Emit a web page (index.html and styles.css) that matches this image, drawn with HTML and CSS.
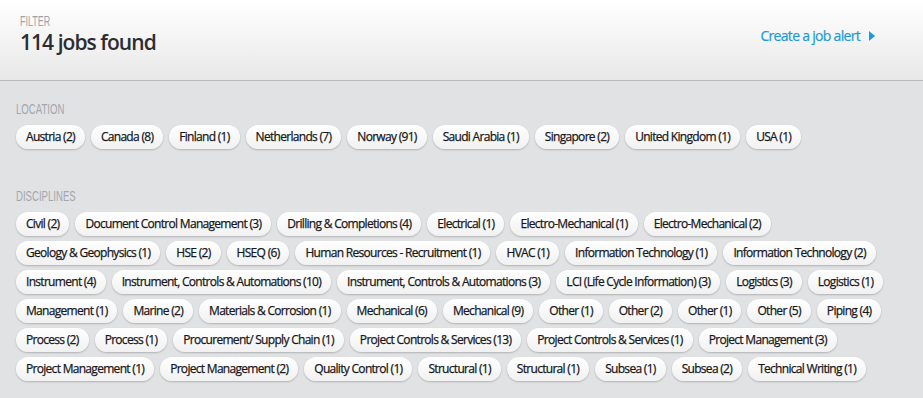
FILE: index.html
```html
<!DOCTYPE html>
<html>
<head>
<meta charset="utf-8">
<link rel="stylesheet" href="styles.css">
</head>
<body>
<header class="head">
  <div class="head-left">
    <div class="eyebrow"><span class="narrow">FILTER</span></div>
    <h1 class="count">114 jobs found</h1>
  </div>
  <a class="alert" href="#">Create a job alert <span class="tri"></span></a>
</header>
<main class="filters">
  <section class="group">
    <h2 class="label"><span class="narrow">LOCATION</span></h2>
    <div class="chips">
      <span class="chip">Austria (2)</span>
      <span class="chip">Canada (8)</span>
      <span class="chip">Finland (1)</span>
      <span class="chip">Netherlands (7)</span>
      <span class="chip">Norway (91)</span>
      <span class="chip">Saudi Arabia (1)</span>
      <span class="chip">Singapore (2)</span>
      <span class="chip">United Kingdom (1)</span>
      <span class="chip">USA (1)</span>
    </div>
  </section>
  <section class="group">
    <h2 class="label"><span class="narrow">DISCIPLINES</span></h2>
    <div class="chips">
      <span class="chip">Civil (2)</span>
      <span class="chip">Document Control Management (3)</span>
      <span class="chip">Drilling &amp; Completions (4)</span>
      <span class="chip">Electrical (1)</span>
      <span class="chip">Electro-Mechanical (1)</span>
      <span class="chip">Electro-Mechanical (2)</span>
      <span class="chip">Geology &amp; Geophysics (1)</span>
      <span class="chip">HSE (2)</span>
      <span class="chip">HSEQ (6)</span>
      <span class="chip">Human Resources - Recruitment (1)</span>
      <span class="chip">HVAC (1)</span>
      <span class="chip">Information Technology (1)</span>
      <span class="chip">Information Technology (2)</span>
      <span class="chip">Instrument (4)</span>
      <span class="chip">Instrument, Controls &amp; Automations (10)</span>
      <span class="chip">Instrument, Controls &amp; Automations (3)</span>
      <span class="chip">LCI (Life Cycle Information) (3)</span>
      <span class="chip">Logistics (3)</span>
      <span class="chip">Logistics (1)</span>
      <span class="chip">Management (1)</span>
      <span class="chip">Marine (2)</span>
      <span class="chip">Materials &amp; Corrosion (1)</span>
      <span class="chip">Mechanical (6)</span>
      <span class="chip">Mechanical (9)</span>
      <span class="chip">Other (1)</span>
      <span class="chip">Other (2)</span>
      <span class="chip">Other (1)</span>
      <span class="chip">Other (5)</span>
      <span class="chip">Piping (4)</span>
      <span class="chip">Process (2)</span>
      <span class="chip">Process (1)</span>
      <span class="chip">Procurement/ Supply Chain (1)</span>
      <span class="chip">Project Controls &amp; Services (13)</span>
      <span class="chip">Project Controls &amp; Services (1)</span>
      <span class="chip">Project Management (3)</span>
      <span class="chip">Project Management (1)</span>
      <span class="chip">Project Management (2)</span>
      <span class="chip">Quality Control (1)</span>
      <span class="chip">Structural (1)</span>
      <span class="chip">Structural (1)</span>
      <span class="chip">Subsea (1)</span>
      <span class="chip">Subsea (2)</span>
      <span class="chip">Technical Writing (1)</span>
    </div>
  </section>
</main>
</body>
</html>
```

FILE: styles.css
```css
* { box-sizing: border-box; }
html, body { margin: 0; padding: 0; }
body {
  background: #e1e2e4;
  font-family: "Open Sans", "Liberation Sans", sans-serif;
  color: #222;
  height: 398px;
  overflow: hidden;
}
.head {
  height: 81px;
  background: linear-gradient(#ffffff, #e8e8e8);
  border-bottom: 1px solid #b9b9b9;
  display: flex;
  align-items: flex-start;
  justify-content: space-between;
  padding: 13px 48px 0 20px;
}
.narrow {
  display: inline-block;
  transform: scaleX(0.64);
  transform-origin: left center;
  font-family: "Liberation Sans", sans-serif;
  font-weight: 400;
}
.eyebrow {
  font-size: 14px;
  line-height: 16px;
  color: #9da3aa;
}
.count {
  margin: 0;
  font-size: 21px;
  line-height: 26px;
  font-weight: 600;
  letter-spacing: -0.95px;
  color: #2b2d31;
}
.alert {
  margin-top: 13px;
  color: #1a9ad7;
  text-decoration: none;
  font-size: 14px;
  font-weight: 500;
  letter-spacing: -0.7px;
  -webkit-text-stroke: 0.2px #1a9ad7;
  display: flex;
  align-items: center;
  gap: 9px;
}
.tri {
  width: 0; height: 0;
  border-top: 5px solid transparent;
  border-bottom: 5px solid transparent;
  border-left: 6px solid #1a9ad7;
}
.filters {
  padding: 19px 16px 0 16px;
  display: flex;
  flex-direction: column;
  gap: 38px;
}
.label {
  margin: 0 0 8px 0;
  font-size: 15px;
  line-height: 17px;
  color: #a3a7ac;
}
.chips {
  display: flex;
  flex-wrap: wrap;
  gap: 5px 6px;
}
.chip {
  height: 24px;
  line-height: 24px;
  padding: 0 10px;
  border-radius: 12px;
  background: linear-gradient(#ffffff, #f1f1f1);
  box-shadow: 0 1px 2px rgba(0,0,0,0.22);
  font-size: 12px;
  font-weight: 500;
  letter-spacing: -0.7px;
  -webkit-text-stroke: 0.25px #17181b;
  color: #17181b;
  white-space: nowrap;
}
```
